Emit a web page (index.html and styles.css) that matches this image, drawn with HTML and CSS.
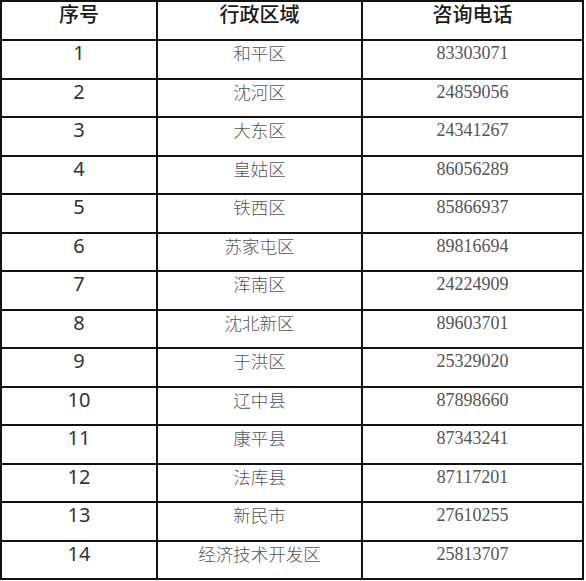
FILE: index.html
```html
<!DOCTYPE html>
<html lang="zh-CN">
<head>
<meta charset="utf-8">
<title>咨询电话</title>
<link rel="stylesheet" href="styles.css">
</head>
<body>
<table class="tbl">
  <colgroup>
    <col class="c1"><col class="c2"><col class="c3">
  </colgroup>
  <thead>
    <tr class="head"><th>序号</th><th>行政区域</th><th>咨询电话</th></tr>
  </thead>
  <tbody>
    <tr><td class="num">1</td><td class="area">和平区</td><td class="tel">83303071</td></tr>
    <tr><td class="num">2</td><td class="area">沈河区</td><td class="tel">24859056</td></tr>
    <tr><td class="num">3</td><td class="area">大东区</td><td class="tel">24341267</td></tr>
    <tr><td class="num">4</td><td class="area">皇姑区</td><td class="tel">86056289</td></tr>
    <tr><td class="num">5</td><td class="area">铁西区</td><td class="tel">85866937</td></tr>
    <tr><td class="num">6</td><td class="area">苏家屯区</td><td class="tel">89816694</td></tr>
    <tr><td class="num">7</td><td class="area">浑南区</td><td class="tel">24224909</td></tr>
    <tr><td class="num">8</td><td class="area">沈北新区</td><td class="tel">89603701</td></tr>
    <tr><td class="num">9</td><td class="area">于洪区</td><td class="tel">25329020</td></tr>
    <tr><td class="num">10</td><td class="area">辽中县</td><td class="tel">87898660</td></tr>
    <tr><td class="num">11</td><td class="area">康平县</td><td class="tel">87343241</td></tr>
    <tr><td class="num">12</td><td class="area">法库县</td><td class="tel">87117201</td></tr>
    <tr><td class="num">13</td><td class="area">新民市</td><td class="tel">27610255</td></tr>
    <tr><td class="num">14</td><td class="area">经济技术开发区</td><td class="tel">25813707</td></tr>
  </tbody>
</table>
</body>
</html>
```
FILE: styles.css
```css
html, body {
  margin: 0;
  padding: 0;
  background: #ffffff;
}
.tbl {
  border-collapse: collapse;
  table-layout: fixed;
  width: 584px;
  font-family: "Noto Sans CJK SC", "Noto Sans", sans-serif;
}
.c1 { width: 156px; }
.c2 { width: 205px; }
.c3 { width: 221px; }
.tbl th, .tbl td {
  border: 2px solid #111111;
  padding: 0;
  text-align: center;
  vertical-align: top;
  line-height: 24px;
}
.head { height: 39px; }
.tbl th {
  font-size: 20px;
  font-weight: 500;
  color: #1a1a1a;
}
.tbl tbody tr { height: 38.5px; }
.num {
  font-family: "Noto Sans", "Liberation Sans", sans-serif;
  font-size: 20px;
  color: #333333;
}
.area {
  font-size: 17.5px;
  font-weight: 300;
  color: #555555;
}
.tel {
  font-family: "Liberation Serif", serif;
  font-size: 18px;
  color: #555555;
}
```
